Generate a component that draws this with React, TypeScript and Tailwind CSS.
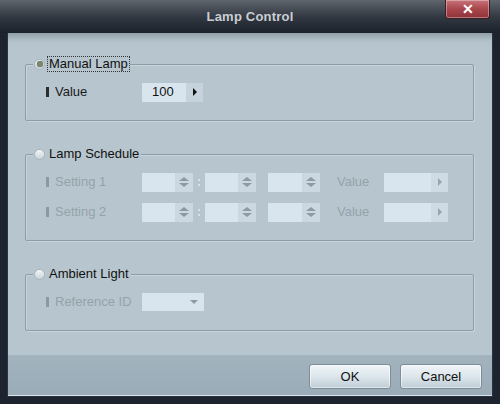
import React from 'react';

const font = { fontFamily: '"Liberation Sans", Arial, sans-serif' };

function Radio({ checked }: { checked?: boolean }) {
  return (
    <span className="w-[11px] h-[11px] rounded-full border border-[#a9b4bb] bg-gradient-to-b from-[#f4f7f9] to-[#c9d3d9] flex items-center justify-center shrink-0">
      {checked && <span className="w-[6px] h-[6px] rounded-full bg-[#7b8770] shadow-[0_0_1px_#4d5646]" />}
    </span>
  );
}

// group box with the radio legend sitting on its top border
function Group({ title, checked, focused, children }: { title: string; checked?: boolean; focused?: boolean; children: React.ReactNode }) {
  return (
    <div className="relative border border-[#8e9ca5] rounded-[2px] shadow-[inset_1px_1px_0_rgba(255,255,255,0.25),1px_1px_0_rgba(255,255,255,0.25)] pl-[20px] pt-[17px] pb-[18px]">
      <div className="absolute left-[7px] -top-[9px] h-[16px] px-[1px] flex items-center gap-[3px] bg-[#b7c6ce]">
        <Radio checked={checked} />
        <span className={`text-[13px] text-[#111] leading-[14px] px-[1px] ${focused ? 'outline outline-1 outline-dotted outline-[#333]' : ''}`}>{title}</span>
      </div>
      {children}
    </div>
  );
}

function Label({ text, disabled }: { text: string; disabled?: boolean }) {
  return (
    <div className="w-[96px] flex items-center gap-[6px] shrink-0">
      <span className={`w-[3px] h-[10px] ${disabled ? 'bg-[#8d989f]' : 'bg-[#2a2e31]'}`} />
      <span className={`text-[13px] ${disabled ? 'text-[#95a2aa]' : 'text-[#1a1a1a]'}`}>{text}</span>
    </div>
  );
}

function Spin({ w }: { w: string }) {
  return (
    <div className={`${w} h-[19px] flex bg-[#d9e5ee]`}>
      <div className="flex-1" />
      <div className="w-[18px] bg-[#cbd8e1] flex flex-col items-center justify-center gap-[2px]">
        <span className="w-0 h-0 border-l-[5px] border-r-[5px] border-b-[4px] border-l-transparent border-r-transparent border-b-[#8d9aa2]" />
        <span className="w-0 h-0 border-l-[5px] border-r-[5px] border-t-[4px] border-l-transparent border-r-transparent border-t-[#8d9aa2]" />
      </div>
    </div>
  );
}

function ArrowBox({ w, value, disabled }: { w: string; value?: string; disabled?: boolean }) {
  return (
    <div className={`${w} h-[19px] flex bg-[#d9e5ee]`}>
      <div className="flex-1 flex items-center pl-[10px] text-[13px] text-[#111]">{value}</div>
      <div className={`w-[17px] flex items-center justify-center ${disabled ? 'bg-[#cfdbe4]' : 'bg-[#c6d3dc]'}`}>
        <span className={`w-0 h-0 border-t-[4px] border-b-[4px] border-l-[4px] border-t-transparent border-b-transparent ${disabled ? 'border-l-[#98a5ad]' : 'border-l-[#111]'}`} />
      </div>
    </div>
  );
}

function SettingRow({ label }: { label: string }) {
  return (
    <div className="flex items-center h-[20px]">
      <Label text={label} disabled />
      <Spin w="w-[51px]" />
      <span className="w-[12px] flex flex-col items-center gap-[3px]">
        <span className="w-[2px] h-[2px] bg-[#d6e1e8]" />
        <span className="w-[2px] h-[2px] bg-[#d6e1e8]" />
      </span>
      <Spin w="w-[51px]" />
      <span className="w-[12px]" />
      <Spin w="w-[52px]" />
      <span className="w-[64px] pl-[17px] text-[13px] text-[#95a2aa]">Value</span>
      <ArrowBox w="w-[64px]" disabled />
    </div>
  );
}

export default function App() {
  return (
    <div style={font} className="w-[500px] h-[404px] bg-[#1d2430] flex flex-col overflow-hidden">
      <div className="h-[33px] relative shrink-0 bg-gradient-to-b from-[#5f656d] via-[#343a43] to-[#1b212b] flex items-center justify-center">
        <span className="text-[13px] font-bold text-[#c9ced4] tracking-[0.2px]">Lamp Control</span>
        <div className="absolute right-[10px] top-0 w-[45px] h-[19px] rounded-b-[3px] border border-t-0 border-[#3a1e22] bg-gradient-to-b from-[#c8737a] via-[#a9464d] to-[#8f3339] shadow-[inset_0_0_0_1px_rgba(255,255,255,0.35)] flex items-center justify-center">
          <span className="text-white text-[14px] font-bold leading-none">✕</span>
        </div>
      </div>

      <div className="mx-[7px] flex-1 flex flex-col border border-[#2c3340] border-t-0">
        <div className="flex-1 bg-[#b7c6ce] bg-[linear-gradient(to_bottom,#8f9ea8_0px,#b2c1ca_8px,#b7c6ce_14px)] pl-[17px] pr-[18px] pt-[31px] flex flex-col gap-[33px]">
          <Group title="Manual Lamp" checked focused>
            <div className="flex items-center h-[20px]">
              <Label text="Value" />
              <ArrowBox w="w-[61px]" value="100" />
            </div>
          </Group>

          <Group title="Lamp Schedule">
            <div className="flex flex-col gap-[10px]">
              <SettingRow label="Setting 1" />
              <SettingRow label="Setting 2" />
            </div>
          </Group>

          <Group title="Ambient Light">
            <div className="flex items-center h-[20px]">
              <Label text="Reference ID" disabled />
              <div className="w-[62px] h-[18px] bg-[#d9e5ee] flex items-center justify-end pr-[6px]">
                <span className="w-0 h-0 border-l-[4px] border-r-[4px] border-t-[4px] border-l-transparent border-r-transparent border-t-[#8d9aa2]" />
              </div>
            </div>
          </Group>
        </div>

        <div className="h-[41px] shrink-0 bg-gradient-to-b from-[#a2b3be] to-[#9aacb7] border-b border-[#d8e2e8] flex items-start justify-end gap-[9px] pt-[9px] pr-[10px]">
          {['OK', 'Cancel'].map((t) => (
            <button
              key={t}
              className="w-[82px] h-[25px] rounded-[3px] border border-[#7e8e98] bg-gradient-to-b from-[#f0f5f8] via-[#dce6ec] to-[#bfcdd5] shadow-[inset_0_0_0_1px_rgba(255,255,255,0.5)] text-[13px] text-[#111]"
            >
              {t}
            </button>
          ))}
        </div>
      </div>
      <div className="h-[7px] shrink-0" />
    </div>
  );
}
